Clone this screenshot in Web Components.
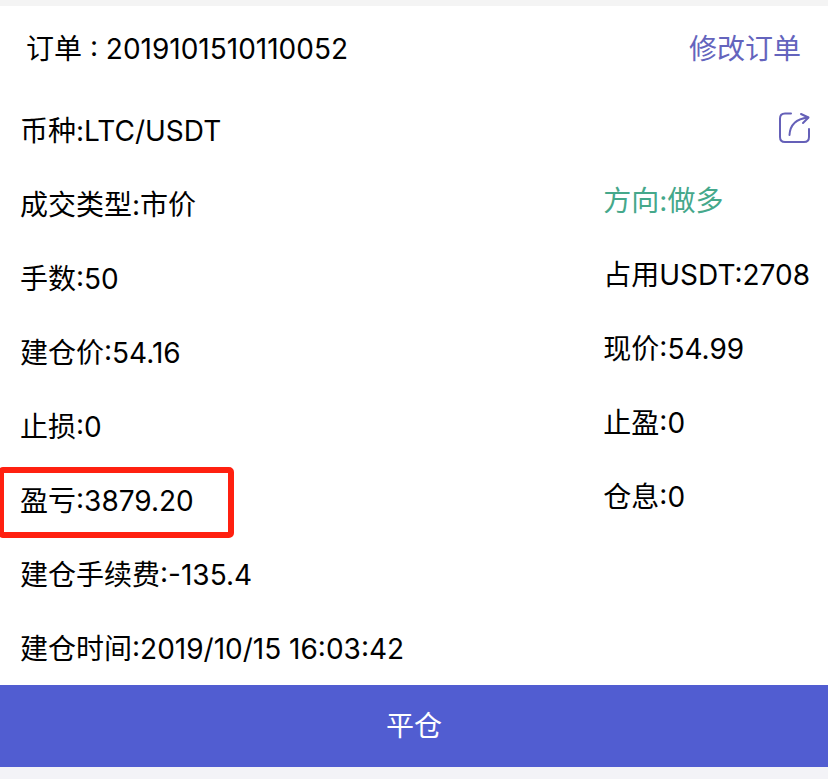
<!DOCTYPE html>
<html lang="zh-CN">
<head>
<meta charset="utf-8">
<meta name="viewport" content="width=device-width, initial-scale=1">
<title>订单</title>
<style>
    body {
        margin: 0;
        min-height: 100vh;
        background: #f3f3f7;
        color: #000;
        font: 28px/40px Inter, "Noto Sans CJK SC", sans-serif;
        --accent: #515dd1;
        --row: 74px;
    }
</style>
</head>
<body>
<order-card>
    <span slot="title">订单 : 2019101510110052</span>
    <a slot="edit" href="#edit">修改订单</a>

    <order-field label="币种">LTC/USDT</order-field>
    <order-field label="成交类型">市价</order-field>
    <order-field label="手数">50</order-field>
    <order-field label="建仓价">54.16</order-field>
    <order-field label="止损">0</order-field>
    <order-field label="盈亏" marked>3879.20</order-field>
    <order-field label="建仓手续费">-135.4</order-field>
    <order-field label="建仓时间">2019/10/15 16:03:42</order-field>

    <share-button slot="side"></share-button>
    <order-field slot="side" label="方向" long>做多</order-field>
    <order-field slot="side" label="占用USDT">2708</order-field>
    <order-field slot="side" label="现价">54.99</order-field>
    <order-field slot="side" label="止盈">0</order-field>
    <order-field slot="side" label="仓息">0</order-field>

    <close-button slot="action">平仓</close-button>
</order-card>

<script>
customElements.define('order-card', class extends HTMLElement {
    constructor() {
        super();
        this.attachShadow({mode: "open"});
        this.shadowRoot.innerHTML = `
            <style>
                :host {
                    display: block;
                    background: #fff;
                    border-top: 6px solid #f4f4f4;
                }
                header {
                    display: flex;
                    align-items: center;
                    justify-content: space-between;
                    box-sizing: border-box;
                    height: 83px;
                    padding: 2px 27px 0 26px;
                }
                ::slotted(a) {
                    color: #6464bd;
                    text-decoration: none;
                }
                .fields {
                    display: grid;
                    grid-template-columns: 1fr auto;
                }
                .main {
                    padding: 4px 0 0 20px;
                }
                .side {
                    padding-right: 18px;
                }
            </style>
            <header>
                <slot name="title"></slot>
                <slot name="edit"></slot>
            </header>
            <div class="fields">
                <div class="main"><slot></slot></div>
                <div class="side"><slot name="side"></slot></div>
            </div>
            <slot name="action"></slot>
            `
    }
});

customElements.define('order-field', class extends HTMLElement {
    constructor() {
        super();
        this.attachShadow({mode: "open"});
        this.shadowRoot.innerHTML = `
            <style>
                :host {
                    display: flex;
                    align-items: center;
                    box-sizing: border-box;
                    position: relative;
                    width: fit-content;
                    height: var(--row);
                    padding-top: 2px;
                    white-space: nowrap;
                }
                :host([long]) {
                    color: #45a88b;
                }
                /* red frame around the row */
                :host([marked])::after {
                    content: "";
                    position: absolute;
                    inset: 4px -40px -1px -22px;
                    border: 6px solid #ff2010;
                    border-radius: 5px;
                }
            </style>
            <span><span class="label"></span>:<slot></slot></span>
            `
    }
    connectedCallback() {
        this.render();
    }

    render() {
        this.shadowRoot.querySelector(".label").textContent = this.getAttribute("label");
    }
});

customElements.define('share-button', class extends HTMLElement {
    constructor() {
        super();
        this.attachShadow({mode: "open"});
        this.shadowRoot.innerHTML = `
            <style>
                :host {
                    display: flex;
                    align-items: center;
                    justify-content: flex-end;
                    box-sizing: border-box;
                    height: var(--row);
                    padding-top: 4px;
                }
                button {
                    display: flex;
                    padding: 0;
                    border: 0;
                    background: none;
                    color: #6560b8;
                    cursor: pointer;
                }
            </style>
            <button type="button" aria-label="分享">
                <svg width="32" height="32" viewBox="0 0 32 32" fill="none" stroke="currentColor" stroke-width="2" stroke-linecap="round" stroke-linejoin="round">
                    <path d="M13 1.500H7Q2 1.500 2 6.500V25Q2 30 7 30H26Q31 30 31 25V17"/>
                    <path d="M11.500 23C12 14 17 7 30 5.500"/>
                    <path d="M23 2L30.500 5.500L25 11"/>
                </svg>
            </button>
            `
    }
});

customElements.define('close-button', class extends HTMLElement {
    constructor() {
        super();
        this.attachShadow({mode: "open"});
        this.shadowRoot.innerHTML = `
            <style>
                :host {
                    display: block;
                }
                button {
                    display: block;
                    width: 100%;
                    height: 82px;
                    padding: 0;
                    border: 0;
                    background: var(--accent);
                    color: #fff;
                    font: inherit;
                    cursor: pointer;
                }
            </style>
            <button type="button"><slot></slot></button>
            `
    }
});
</script>
</body>
</html>
